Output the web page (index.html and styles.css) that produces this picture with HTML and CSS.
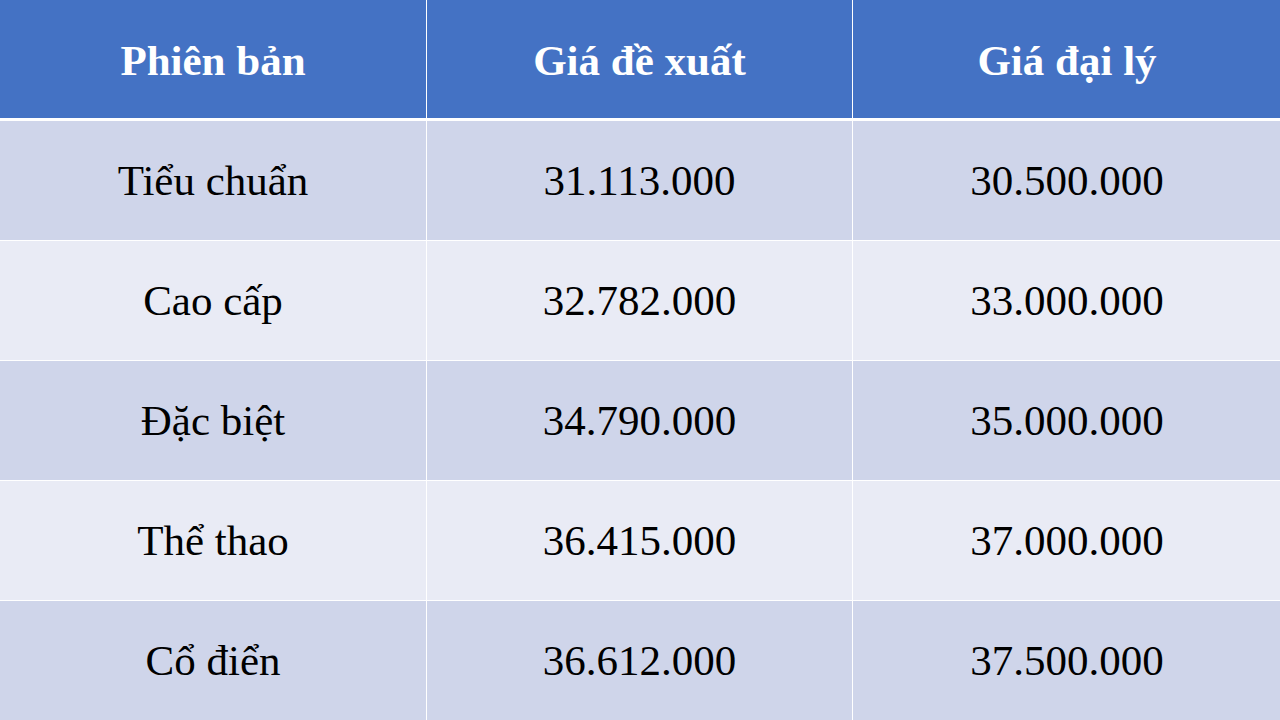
FILE: index.html
```html
<!DOCTYPE html>
<html lang="vi">
<head>
<meta charset="utf-8">
<link rel="stylesheet" href="styles.css">
</head>
<body>
<div class="table">
  <div class="cell head">Phiên bản</div>
  <div class="cell head">Giá đề xuất</div>
  <div class="cell head">Giá đại lý</div>

  <div class="cell odd">Tiểu chuẩn</div>
  <div class="cell odd">31.113.000</div>
  <div class="cell odd">30.500.000</div>

  <div class="cell even">Cao cấp</div>
  <div class="cell even">32.782.000</div>
  <div class="cell even">33.000.000</div>

  <div class="cell odd">Đặc biệt</div>
  <div class="cell odd">34.790.000</div>
  <div class="cell odd">35.000.000</div>

  <div class="cell even">Thể thao</div>
  <div class="cell even">36.415.000</div>
  <div class="cell even">37.000.000</div>

  <div class="cell odd">Cổ điển</div>
  <div class="cell odd">36.612.000</div>
  <div class="cell odd">37.500.000</div>
</div>
</body>
</html>
```

FILE: styles.css
```css
html, body {
  margin: 0;
  padding: 0;
  background: #ffffff;
}

.table {
  display: grid;
  grid-template-columns: 426px 425px 428px;
  grid-template-rows: 120px repeat(5, 119px);
  column-gap: 1px;
  row-gap: 1px;
  width: 1280px;
  height: 720px;
  background: #ffffff;
  font-family: "Liberation Serif", "Times New Roman", serif;
  font-size: 43px;
  color: #000000;
}

.cell {
  display: flex;
  align-items: center;
  justify-content: center;
}

.head {
  background: #4472c4;
  color: #ffffff;
  font-weight: bold;
  border-bottom: 2px solid #ffffff;
  box-sizing: border-box;
  padding-top: 2px;
}

.odd {
  background: #cfd5ea;
}

.even {
  background: #e9ebf5;
}
```
